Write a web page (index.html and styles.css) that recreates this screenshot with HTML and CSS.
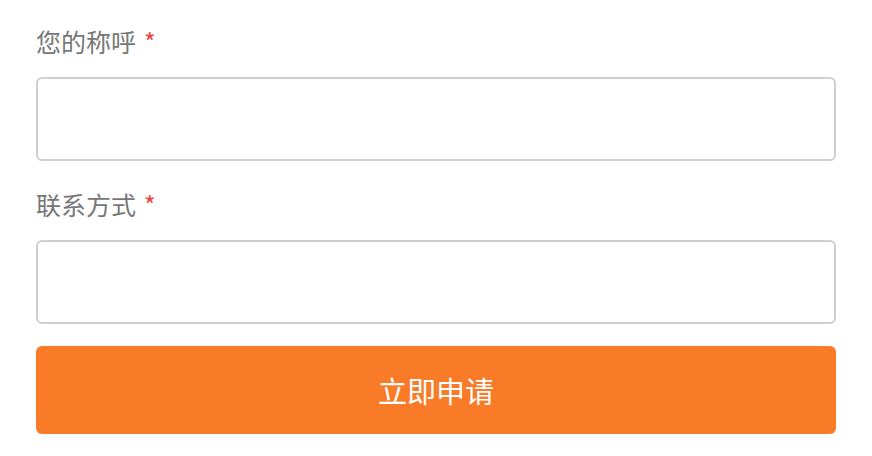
FILE: index.html
```html
<!DOCTYPE html>
<html lang="zh-CN">
<head>
    <meta charset="UTF-8">
    <meta name="viewport" content="width=device-width, initial-scale=1.0">
    <title>立即申请</title>
    <link rel="stylesheet" href="styles.css">
</head>
<body>
    <form class="apply-form">
        <div class="field">
            <label class="field-label" for="name">您的称呼<span class="required">*</span></label>
            <input class="field-input" id="name" type="text">
        </div>
        <div class="field">
            <label class="field-label" for="contact">联系方式<span class="required">*</span></label>
            <input class="field-input" id="contact" type="text">
        </div>
        <button class="submit-btn" type="button">立即申请</button>
    </form>
</body>
</html>
```

FILE: styles.css
```css
body {
    margin: 0;
    background: #fff;
    font-family: "Noto Sans CJK SC", "Noto Sans", sans-serif;
}
.apply-form {
    padding: 26px 36px 0 36px;
    width: 800px;
}
.field {
    display: flex;
    flex-direction: column;
    margin-bottom: 28px;
}
.field:last-of-type {
    margin-bottom: 22px;
}
.field-label {
    font-size: 25px;
    line-height: 30px;
    color: #777;
    margin-bottom: 21px;
}
.required {
    color: #f0413c;
    font-size: 25px;
    margin-left: 8px;
}
.field-input {
    box-sizing: border-box;
    width: 800px;
    height: 84px;
    border: 2px solid #cfcfcf;
    border-radius: 6px;
    background: #fff;
    margin: 0;
    padding: 0 16px;
    font-size: 22px;
}
.submit-btn {
    display: block;
    width: 800px;
    height: 88px;
    border: none;
    border-radius: 6px;
    background: #f97b27;
    color: #fff;
    font-family: inherit;
    font-size: 29px;
    cursor: pointer;
}
```
